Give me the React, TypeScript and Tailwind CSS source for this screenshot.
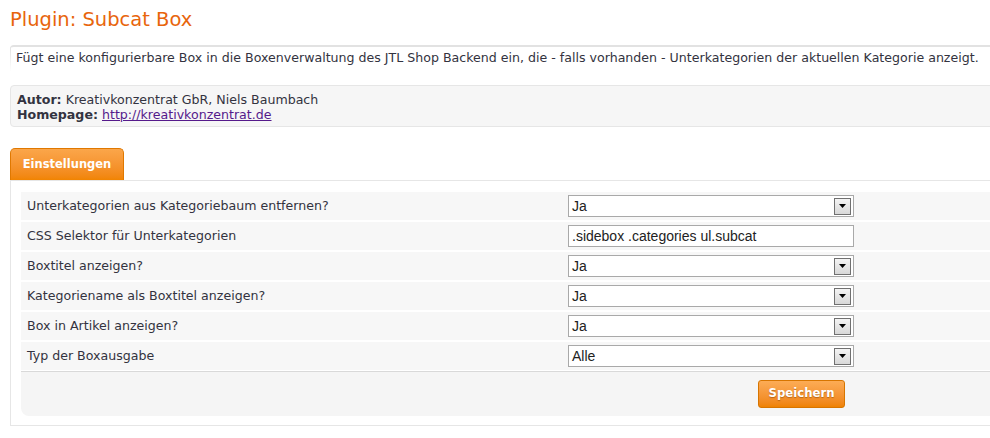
const rows: { label: string; value: string; kind: "select" | "input" }[] = [
  { label: "Unterkategorien aus Kategoriebaum entfernen?", value: "Ja", kind: "select" },
  { label: "CSS Selektor für Unterkategorien", value: ".sidebox .categories ul.subcat", kind: "input" },
  { label: "Boxtitel anzeigen?", value: "Ja", kind: "select" },
  { label: "Kategoriename als Boxtitel anzeigen?", value: "Ja", kind: "select" },
  { label: "Box in Artikel anzeigen?", value: "Ja", kind: "select" },
  { label: "Typ der Boxausgabe", value: "Alle", kind: "select" },
];

function Field({ value, kind }: { value: string; kind: "select" | "input" }) {
  return (
    <div className="flex h-[22px] w-[286px] items-center justify-between border border-[#a9a9a9] bg-white pl-[3px] pr-[2px] font-['Liberation_Sans',Arial,sans-serif] text-[14px] text-[#222]">
      <span>{value}</span>
      {kind === "select" ? (
        <span className="flex h-[17px] w-[17px] items-center justify-center border border-[#707070] bg-gradient-to-b from-[#f4f4f4] to-[#d8d8d8]">
          <svg width="7" height="4" viewBox="0 0 7 4">
            <path d="M0 0h7L3.5 4z" fill="#000" />
          </svg>
        </span>
      ) : null}
    </div>
  );
}

export default function App() {
  return (
    <div className="h-[438px] w-[990px] overflow-hidden bg-white font-['DejaVu_Sans',Verdana,sans-serif] text-[#333340]">
      <div className="pl-[10px]">
        <h1 className="pt-[7px] font-['DejaVu_Sans',Verdana,sans-serif] text-[19.5px] leading-[26px] text-[#e8650c]">
          Plugin: Subcat Box
        </h1>

        {/* top rule with a left edge that fades out */}
        <div className="mt-[12px] w-[1000px] rounded-tl-[4px] border-t-2 border-[#e2e2e2] bg-[linear-gradient(to_bottom,#e2e2e2,#ffffff_70%)] bg-[length:1px_100%] bg-no-repeat px-[6px] pt-[3px] pb-[17px] text-[12.6px] leading-[15px]">
          Fügt eine konfigurierbare Box in die Boxenverwaltung des JTL Shop Backend ein, die - falls vorhanden - Unterkategorien der aktuellen Kategorie anzeigt.
        </div>

        <div className="mt-[3px] w-[1000px] rounded-[4px] border border-[#e6e6e6] bg-[#f6f6f6] px-[6px] pt-[6px] pb-[4px] text-[12.6px] leading-[15px]">
          <div>
            <b>Autor:</b> Kreativkonzentrat GbR, Niels Baumbach
          </div>
          <div>
            <b>Homepage:</b>{" "}
            <a href="#" className="text-[#551a8b] underline">
              http://kreativkonzentrat.de
            </a>
          </div>
        </div>

        <div className="mt-[21px] flex">
          <div className="flex h-[32px] w-[114px] items-center justify-center rounded-t-[5px] border border-b-0 border-[#e07800] bg-gradient-to-b from-[#fba64a] to-[#f18400] text-[11.5px] font-bold text-white">
            Einstellungen
          </div>
        </div>

        <div className="w-[1000px] border border-[#e6e6e6] pt-[11px] pb-[9px] pl-[10px]">
          <div className="flex flex-col gap-[2px]">
            {rows.map((row) => (
              <div key={row.label} className="flex h-[28px] items-center bg-[#f7f7f7] pl-[6px] text-[12.6px]">
                <span className="w-[541px]">{row.label}</span>
                <Field value={row.value} kind={row.kind} />
              </div>
            ))}
          </div>
          <div className="mt-[1px] flex h-[45px] items-center rounded-b-[8px] border-t border-[#d9d9d9] bg-[#f5f5f5] pl-[737px]">
            <button className="h-[28px] w-[87px] rounded-[3px] border border-[#d77500] bg-gradient-to-b from-[#fcac55] to-[#ef8200] text-[11.7px] font-bold text-white [text-shadow:0_1px_1px_rgba(120,60,0,0.5)]">
              Speichern
            </button>
          </div>
        </div>
      </div>
    </div>
  );
}
